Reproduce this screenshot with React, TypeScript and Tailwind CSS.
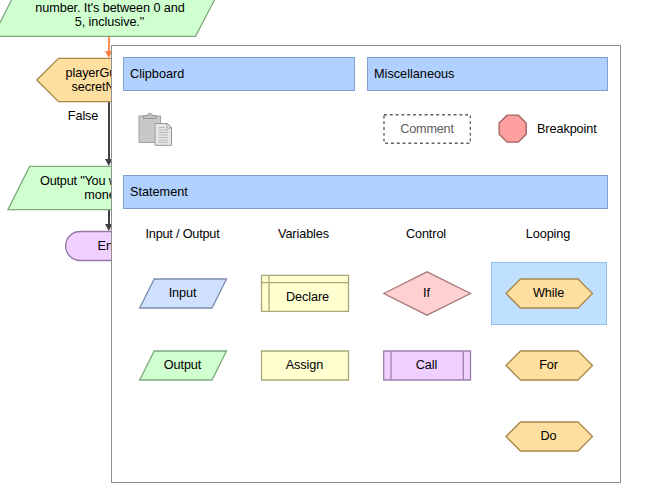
import type { ReactNode } from "react";

const FONT = "font-['Liberation_Sans',Arial,sans-serif]";

function Flowchart() {
  return (
    <svg
      width="650"
      height="499"
      className="absolute left-0 top-0 text-[12.7px] tracking-[-0.1px]"
      strokeWidth="1.3"
    >
      <polygon points="-7,36.3 12,-1 215,-1 195.5,36.3" fill="#d0ffd0" stroke="#80a880" />
      <text x="35.3" y="12">number. It's between 0 and</text>
      <text x="74.8" y="26.3">5, inclusive."</text>

      <path d="M109 37V52" stroke="#ff8040" strokeWidth="1.8" />
      <polygon points="105,51 112.5,51 108.8,58" fill="#ff8040" />

      <polygon points="36.8,80 58.5,58.3 160,58.3 160,101.6 58.5,101.6" fill="#ffdfa0" stroke="#a8864a" />
      <text x="65.5" y="76.8">playerGu</text>
      <text x="71.5" y="91">secretN</text>

      <text x="67.8" y="120">False</text>
      <path d="M109 102.3V160M109 210V225" stroke="#404040" strokeWidth="2" />
      <polygon points="105,159 112.5,159 108.8,166" fill="#404040" />

      <polygon points="8,209.6 29.6,166.4 160,166.4 160,209.6" fill="#d0ffd0" stroke="#80a880" />
      <text x="40" y="185" className="tracking-[-0.2px]">Output "You w</text>
      <text x="84.3" y="199.4">mone</text>
      <polygon points="105,224 112.5,224 108.8,231" fill="#404040" />

      <rect x="65.6" y="231.5" width="87" height="29" rx="14.5" fill="#f0d0ff" stroke="#9478a4" />
      <text x="97.6" y="250">En</text>
    </svg>
  );
}

function Header({ label, className }: { label: string; className: string }) {
  return (
    <div
      className={`flex h-[34px] items-center border border-[#80a0d0] bg-[#b0d0ff] pl-[6px] pt-px ${className}`}
    >
      {label}
    </div>
  );
}

type CellProps = {
  label: string;
  children: ReactNode;
  selected?: boolean;
  textClass?: string;
};

function Cell({ label, children, selected = false, textClass = "pt-px" }: CellProps) {
  return (
    <div
      className={`grid h-[63px] w-[116px] place-items-center ${
        selected ? "bg-[#c0e0ff] outline outline-1 -outline-offset-1 outline-[#90c0f0]" : ""
      }`}
    >
      <svg viewBox="0 0 116 63" width="116" height="63" strokeWidth="1.3" className="[grid-area:1/1]">
        {children}
      </svg>
      <span className={`z-10 -ml-px tracking-[-0.1px] [grid-area:1/1] ${textClass}`}>{label}</span>
    </div>
  );
}

const loopShape = (
  <polygon points="15,31.5 29.5,17 87,17 101.5,31.5 87,46 29.5,46" fill="#ffdfa0" stroke="#a8864a" />
);

function PasteIcon() {
  return (
    <svg width="36" height="36" viewBox="0 0 36 36">
      <rect x="1" y="4" width="21.5" height="26.5" fill="#c8c8c8" stroke="#a0a0a0" />
      <path d="M5.5 6.5V3.5H9.5C9.5 .5 14 .5 14 3.5H18V6.5Z" fill="#c0c0c0" stroke="#989898" />
      <path d="M17 11.5H29.5L33.5 15.5V33.3H17Z" fill="#e6e6e6" stroke="#989898" />
      <path d="M29 11.5V16H33.5Z" fill="#fff" stroke="#989898" />
      <path d="M20.5 15.5H27M20.5 18H30M20.5 20.5H30M20.5 23H30M20.5 25.5H30M20.5 28H30M20.5 30.3H30" stroke="#b8b8b8" />
    </svg>
  );
}

function ShapePanel() {
  return (
    <div className="absolute left-[111px] top-[45px] h-[438px] w-[510px] border border-[#909090] bg-white pl-[11px] pt-[11px]">
      <div className="flex gap-[12px]">
        <Header label="Clipboard" className="w-[232px]" />
        <Header label="Miscellaneous" className="w-[241px]" />
      </div>

      <div className="flex h-[84px] items-start pl-[15px] pt-[21px]">
        <PasteIcon />
        <div className="ml-[209px] grid h-[32px] w-[88px] place-items-center">
          <svg width="88" height="32" className="[grid-area:1/1]">
            <rect
              x="1"
              y="2.8"
              width="86.4"
              height="28.5"
              fill="none"
              stroke="#606060"
              strokeWidth="1.4"
              strokeDasharray="2.9 2.9"
            />
          </svg>
          <span className="mt-[4px] tracking-[-0.2px] text-[#606060] [grid-area:1/1]">Comment</span>
        </div>
        <svg width="30" height="30" className="ml-[27px] mt-[2px]">
          <polygon
            points="9.2,1 20.8,1 29,9.2 29,20.8 20.8,29 9.2,29 1,20.8 1,9.2"
            transform="translate(.2 .2) scale(.965)"
            fill="#ffa0a0"
            stroke="#a06060"
            strokeWidth="1.4"
          />
        </svg>
        <span className="ml-[9px] mt-[8px] leading-[18px] tracking-[-0.1px]">Breakpoint</span>
      </div>

      <Header label="Statement" className="w-[485px]" />

      <div className="ml-[2px] mt-[16px] grid w-[482px] grid-cols-4 gap-x-[6px] text-center leading-[18px] tracking-[-0.1px]">
        <span className="-ml-px tracking-[-0.2px]">Input / Output</span>
        <span className="-ml-[3px]">Variables</span>
        <span className="-ml-[2px]">Control</span>
        <span className="-ml-[2px]">Looping</span>
      </div>

      <div className="ml-[2px] mt-[19px] grid w-[482px] grid-cols-4 gap-x-[6px] gap-y-[8.5px]">
        <Cell label="Input">
          <polygon points="14.7,46 29.2,17 101.5,17 87,46" fill="#d0e0ff" stroke="#7c8cac" />
        </Cell>
        <Cell label="Declare" textClass="mt-[8px] pl-[6px]">
          <path d="M14.5 13.3H101.5V49.3H14.5Z" fill="#ffffd0" stroke="#a8a878" />
          <path d="M22 13.3V49.3M14.5 20.6H101.5" stroke="#a8a878" />
        </Cell>
        <Cell label="If">
          <polygon points="14.8,31.5 58,9.8 101.5,31.5 58,53.2" fill="#ffd0d0" stroke="#a87c7c" />
        </Cell>
        <Cell label="While" selected>
          {loopShape}
        </Cell>

        <Cell label="Output">
          <polygon points="14.7,46 29.2,17 101.5,17 87,46" fill="#d0ffd0" stroke="#80a880" />
        </Cell>
        <Cell label="Assign">
          <path d="M14.5 17H101.5V46H14.5Z" fill="#ffffd0" stroke="#a8a878" />
        </Cell>
        <Cell label="Call">
          <path d="M14.7 17H101.5V46H14.7Z" fill="#f0d0ff" stroke="#9c80ac" />
          <path d="M22 17V46M94.3 17V46" stroke="#9c80ac" />
        </Cell>
        <Cell label="For">{loopShape}</Cell>

        <div className="col-start-4">
          <Cell label="Do">{loopShape}</Cell>
        </div>
      </div>
    </div>
  );
}

export default function App() {
  return (
    <div className={`relative h-[499px] w-[650px] overflow-hidden bg-white text-[12.7px] text-black ${FONT}`}>
      <Flowchart />
      <ShapePanel />
    </div>
  );
}
